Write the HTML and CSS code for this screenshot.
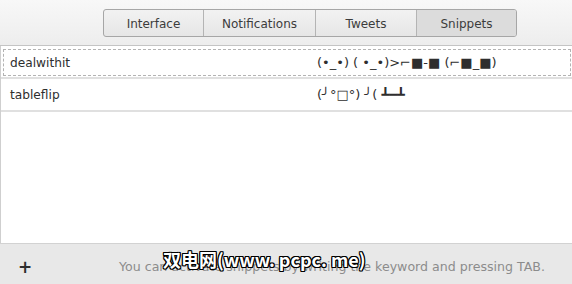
FILE: index.html
```html
<!DOCTYPE html>
<html>
<head>
<meta charset="utf-8">
<link rel="stylesheet" href="styles.css">
</head>
<body>
<div class="window">
  <div class="toolbar">
    <div class="tabs">
      <div class="tab t1">Interface</div>
      <div class="tab t2">Notifications</div>
      <div class="tab t3">Tweets</div>
      <div class="tab t4 active">Snippets</div>
    </div>
  </div>
  <div class="list">
    <div class="row first">
      <div class="cell focused">
        <div class="key">dealwithit</div>
        <div class="val">(•_•) ( •_•)&gt;⌐■-■ (⌐■_■)</div>
      </div>
    </div>
    <div class="row">
      <div class="cell">
        <div class="key">tableflip</div>
        <div class="val">(╯°□°) ╯( ┻━┻</div>
      </div>
    </div>
  </div>
  <div class="footer">
    <div class="add">+</div>
    <div class="hint">You can activate snippets by writing the keyword and pressing TAB.</div>
    <div class="watermark">双电网(www. pcpc. me)</div>
  </div>
</div>
</body>
</html>
```

FILE: styles.css
```css
html, body {
  margin: 0;
  padding: 0;
  width: 572px;
  height: 284px;
  overflow: hidden;
  font-family: "DejaVu Sans", sans-serif;
  font-size: 13px;
  color: #333;
  background: #fff;
}
.window {
  display: flex;
  flex-direction: column;
  height: 284px;
}
.toolbar {
  height: 46px;
  box-sizing: border-box;
  background: linear-gradient(#f8f8f8, #ededed);
  border-bottom: 1px solid #c4c4c4;
  display: flex;
  align-items: flex-start;
  padding: 9px 0 0 103px;
  flex: none;
}
.tabs {
  display: flex;
  height: 28px;
  box-sizing: border-box;
  border: 1px solid #a6a6a6;
  border-radius: 3px;
  background: linear-gradient(#f2f2f2, #e6e6e6);
  overflow: hidden;
}
.tab {
  display: flex;
  align-items: center;
  justify-content: center;
  color: #3c3c3c;
  border-left: 1px solid #b4b4b4;
  font-size: 12px;
  padding-top: 1px;
}
.tab.t1 { width: 99px; border-left: none; }
.tab.t2 { width: 111px; }
.tab.t3 { width: 100px; }
.tab.t4 { width: 99px; }
.tab.active { background: #dcdcdc; }
.list {
  flex: 1;
  border-left: 1px solid #cfcfcf;
}
.row {
  display: flex;
  height: 33px;
  box-sizing: border-box;
  border-bottom: 2px solid #e0e0e0;
  padding: 0 1px 0 2px;
}
.row.first {
  padding: 3px 1px 1px 2px;
}
.cell {
  flex: 1;
  display: flex;
  align-items: center;
  box-sizing: border-box;
  border: 1px solid transparent;
}
.cell.focused {
  border: 1px dashed #b3b3b3;
}
.key {
  width: 307px;
  padding-left: 6px;
  color: #2e2e2e;
  font-size: 12.2px;
}
.val {
  color: #2e2e2e;
  font-size: 13px;
}
.footer {
  position: relative;
  height: 41px;
  flex: none;
  box-sizing: border-box;
  background: #e8e8e8;
  border-top: 1px solid #d2d2d2;
  display: flex;
  align-items: center;
  padding-top: 5px;
}
.add {
  width: 16px;
  margin-left: 18px;
  font-size: 17px;
  font-weight: bold;
  color: #2e2e2e;
}
.hint {
  margin-left: 85px;
  color: #8c8c8c;
  font-size: 12.6px;
}
.watermark {
  position: absolute;
  left: 163px;
  top: 2px;
  font-family: "Noto Sans CJK SC", sans-serif;
  font-size: 18px;
  font-weight: bold;
  color: #fff;
  white-space: nowrap;
  text-shadow: 1px 1px 0 #000, -1px -1px 0 #000, 1px -1px 0 #000, -1px 1px 0 #000, 0 1px 0 #000, 1px 0 0 #000, 0 -1px 0 #000, -1px 0 0 #000;
}
```
